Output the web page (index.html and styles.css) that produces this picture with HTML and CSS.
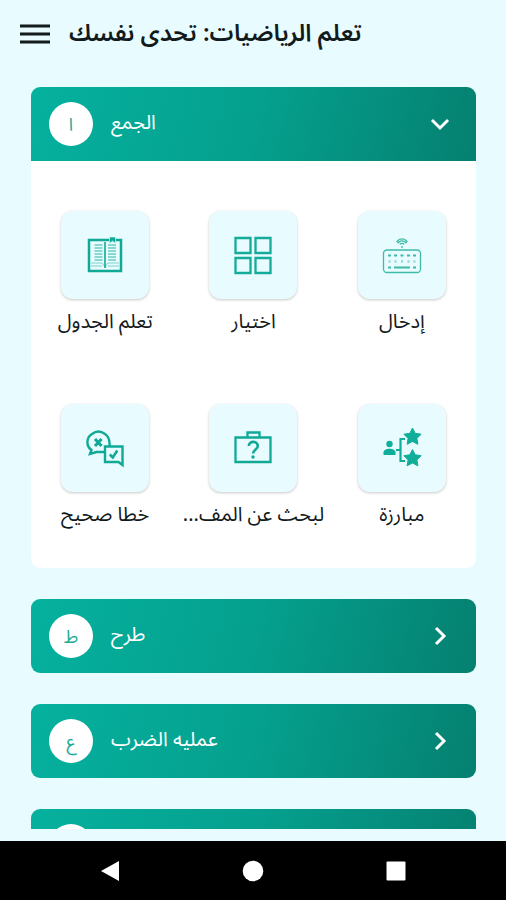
FILE: index.html
```html
<!DOCTYPE html>
<html lang="ar">
<head>
<meta charset="utf-8">
<meta name="viewport" content="width=device-width, initial-scale=1">
<title>تعلم الرياضيات: تحدى نفسك</title>
<link rel="stylesheet" href="styles.css">
</head>
<body>
<div class="app">
  <header class="topbar">
    <button class="menu-button" type="button" aria-label="القائمة">
      <svg width="32" height="20" viewBox="0 0 32 20"><path d="M1 2h30M1 10h30M1 18h30" stroke="#121a1b" stroke-width="3"/></svg>
    </button>
    <h1 class="title" dir="rtl">تعلم الرياضيات: تحدى نفسك</h1>
  </header>

  <main class="content">
    <section class="card">
      <button class="card-header card-header-open" type="button" aria-expanded="true">
        <span class="badge">ا</span>
        <span class="card-title" dir="rtl">الجمع</span>
        <svg class="chevron" viewBox="0 0 24 24"><path d="M4 8l8 8 8-8"/></svg>
      </button>
      <div class="grid">
        <button class="item" type="button">
          <span class="tile">
            <svg class="icon" viewBox="0 0 40 40" fill="none" stroke="#0fa996">
              <path d="M4 5h32v31H4z" stroke-width="2.500"/>
              <path d="M20 7v26" stroke-width="1.6"/>
              <path d="M6 28h11l3 4 3-4h11M6 31h11M23 31h11" stroke-width="1" opacity=".5"/>
              <path d="M9.500 10h8M9.500 13h8M9.500 16h8M9.500 19h8M9.500 22h8M9.500 25h8M23 10h8M23 13h8M23 16h8M23 19h8M23 22h8M23 25h8" stroke-width="1.200" opacity=".85"/>
              <path d="M24.500 2h6v6.500l-3-2.500-3 2.500z" fill="#0fa996" stroke="#e8fbff" stroke-width=".6"/>
            </svg>
          </span>
          <span class="label" dir="rtl">تعلم الجدول</span>
        </button>
        <button class="item" type="button">
          <span class="tile">
            <svg class="icon" viewBox="0 0 40 40" fill="none" stroke="#14ab9a" stroke-width="2.300">
              <path d="M2.500 3h15v15h-15zM22.500 3h15v15h-15zM2.500 23h15v15h-15zM22.500 23h15v15h-15z"/>
            </svg>
          </span>
          <span class="label" dir="rtl">اختيار</span>
        </button>
        <button class="item" type="button">
          <span class="tile">
            <svg class="icon" viewBox="0 0 40 40" fill="none" stroke="#3dbba8" stroke-width="1.300">
              <rect x="1.500" y="15" width="37" height="22.500" rx="3.500"/>
              <path d="M15 6.500c2.500-3.500 7.500-3.500 10 0l-1.300 1.200c-2-2.500-5.400-2.500-7.400 0zM17.800 9.300c1.300-1.300 3.100-1.300 4.400 0M20 11v2"/>
              <path d="M6 20.500h3M12 20.500h3M18.500 20.500h3M25 20.500h3M31 20.500h3M6 32.500h3M12 32.500h16M31 32.500h3" stroke-width="1.800"/>
              <path d="M6.500 26.500h2M12.500 26.500h2M19 26.500h2M25.500 26.500h2M31.500 26.500h2" stroke-width="2.500" opacity=".5"/>
            </svg>
          </span>
          <span class="label" dir="rtl">إدخال</span>
        </button>
        <button class="item" type="button">
          <span class="tile">
            <svg class="icon" viewBox="0 0 40 40" fill="none" stroke="#0fa996" stroke-width="2.400">
              <path d="M20 24h-8.500L5 26l1.500-4C.500 18 1.500 9 7 6c4-3 9-3 13 0 3 2 5 6 4.500 12"/>
              <path d="M10 11l6.500 7M16.500 11l-6.500 7" stroke-width="3"/>
              <path d="M20 18.500h17.500V37l-4-3H20z"/>
              <path d="M24.800 26.500l3 3 4.500-7" stroke-width="2.600"/>
            </svg>
          </span>
          <span class="label" dir="rtl">خطا صحيح</span>
        </button>
        <button class="item" type="button">
          <span class="tile">
            <svg class="icon" viewBox="0 0 40 40" fill="none" stroke="#0fa996" stroke-width="2.300">
              <path d="M2.500 9.500h35v24.500h-35zM14.500 9.500v-5h12v5"/>
              <path d="M15.800 18c0-5.500 9-5.500 9 0 0 3.500-4.600 3.500-4.600 7.500" stroke-width="2.600"/>
              <circle cx="20" cy="29" r="1.700" fill="#0fa996" stroke="none"/>
            </svg>
          </span>
          <span class="label" dir="rtl">لبحث عن المف...</span>
        </button>
        <button class="item" type="button">
          <span class="tile">
            <svg class="icon" viewBox="0 0 40 40" fill="#0fae9a">
              <circle cx="7.500" cy="16" r="3.200"/>
              <path d="M1.500 27v-2.500c0-5 12-5 12 0V27z"/>
              <path d="M14 22h4M23 11h-4.500v22H23" fill="none" stroke="#0fae9a" stroke-width="2.200"/>
              <path id="star" d="M30.500 0l2.700 5.300 5.900.9-4.200 4.200 1 5.900-5.400-2.800-5.400 2.800 1-5.900-4.200-4.200 5.900-.9z" stroke="#0fae9a" stroke-linejoin="round"/>
              <use href="#star" y="21.500"/>
            </svg>
          </span>
          <span class="label" dir="rtl">مبارزة</span>
        </button>
      </div>
    </section>

    <section class="card">
      <button class="card-header" type="button" aria-expanded="false">
        <span class="badge">ط</span>
        <span class="card-title" dir="rtl">طرح</span>
        <svg class="chevron" viewBox="0 0 24 24"><path d="M8 4l8 8-8 8"/></svg>
      </button>
    </section>

    <section class="card">
      <button class="card-header" type="button" aria-expanded="false">
        <span class="badge">ع</span>
        <span class="card-title" dir="rtl">عمليه الضرب</span>
        <svg class="chevron" viewBox="0 0 24 24"><path d="M8 4l8 8-8 8"/></svg>
      </button>
    </section>

    <section class="card">
      <button class="card-header" type="button" aria-expanded="false" aria-label="القسم التالي">
        <span class="badge"></span>
      </button>
    </section>
  </main>

  <nav class="navbar">
    <button class="nav-button" type="button" aria-label="رجوع">
      <svg width="22" height="22" viewBox="0 0 22 22"><path d="M2 11L20 1v20z" fill="#fff"/></svg>
    </button>
    <button class="nav-button" type="button" aria-label="الرئيسية">
      <svg width="22" height="22" viewBox="0 0 22 22"><circle cx="11" cy="11" r="10.300" fill="#fff"/></svg>
    </button>
    <button class="nav-button" type="button" aria-label="التطبيقات الأخيرة">
      <svg width="22" height="22" viewBox="0 0 22 22"><rect x="1.500" y="1.500" width="19" height="19" rx="1" fill="#fff"/></svg>
    </button>
  </nav>
</div>
</body>
</html>
```
FILE: styles.css
```css
* {
  box-sizing: border-box;
}

body {
  margin: 0;
  background: #e8fbff;
  color: #121a1b;
  font-family: "Noto Sans", "Noto Sans Arabic", "DejaVu Sans", sans-serif;
}

button {
  margin: 0;
  padding: 0;
  border: 0;
  background: none;
  color: inherit;
  font: inherit;
  cursor: pointer;
}

svg {
  display: block;
}

.app {
  display: flex;
  flex-direction: column;
  height: 100vh;
}

.topbar {
  display: flex;
  align-items: center;
  gap: 18px;
  height: 68px;
  padding: 0 19px;
  flex: none;
}

.title {
  margin: 0;
  padding-bottom: 4px;
  font-size: 24px;
  line-height: 36px;
  font-weight: 600;
  white-space: nowrap;
}

.content {
  display: flex;
  flex-direction: column;
  gap: 31px;
  flex: 1;
  min-height: 0;
  margin: 19px 30px 12px 31px;
  overflow: hidden;
}

.card {
  flex: none;
  border-radius: 9px;
  background: #fff;
}

.card-header {
  display: flex;
  align-items: center;
  width: 100%;
  height: 74px;
  padding: 0 24px 0 18px;
  border-radius: 9px;
  background: linear-gradient(105deg, #05b19e, #05a08e 50%, #058070);
  color: #fff;
}

.card-header-open {
  border-radius: 9px 9px 0 0;
}

.badge {
  display: grid;
  place-items: center;
  width: 44px;
  height: 44px;
  margin-right: 18px;
  border-radius: 50%;
  background: #fff;
  color: #1caa96;
  font-size: 18px;
  line-height: 24px;
}

.card-title {
  padding-bottom: 4px;
  font-size: 20px;
  line-height: 28px;
}

.chevron {
  width: 24px;
  height: 24px;
  margin-left: auto;
  fill: none;
  stroke: #fff;
  stroke-width: 3;
}

.grid {
  display: grid;
  grid-template-columns: repeat(3, minmax(0, 1fr));
  row-gap: 69px;
  padding: 50px 0 40px;
}

.item {
  display: flex;
  flex-direction: column;
  align-items: center;
  gap: 8px;
}

.tile {
  display: grid;
  place-items: center;
  width: 88px;
  height: 88px;
  border-radius: 12px;
  background: #e8fbff;
  box-shadow: 0 1px 3px rgba(0, 0, 0, 0.22);
}

.icon {
  width: 40px;
  height: 40px;
}

.label {
  font-size: 20px;
  line-height: 28px;
  white-space: nowrap;
}

.navbar {
  display: flex;
  justify-content: space-between;
  align-items: center;
  flex: none;
  height: 59px;
  padding: 0 99px;
  background: #000;
}
```
